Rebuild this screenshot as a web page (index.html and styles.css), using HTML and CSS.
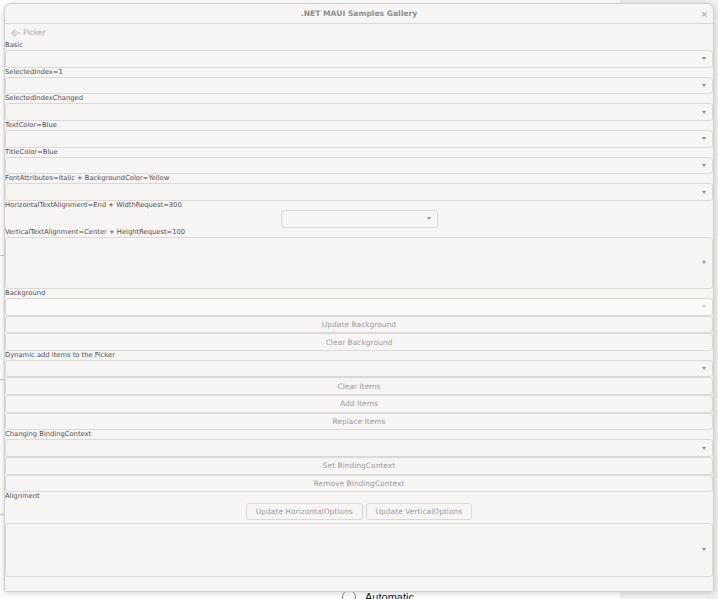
FILE: index.html
```html
<!DOCTYPE html>
<html lang="en">
<head>
  <meta charset="UTF-8" />
  <meta name="viewport" content="width=device-width, initial-scale=1.0" />
  <title>.NET MAUI Samples Gallery</title>
  <link rel="stylesheet" href="styles.css">
</head>
<body>

  <!-- Page behind the dialog window -->
  <div class="page">
    <div class="page-main">
      <div class="page-row row-a"></div>
      <div class="page-row row-b"></div>
      <div class="page-row row-c"></div>
      <div class="radio-row">
        <span class="radio"></span>
        <span class="radio-text">Automatic</span>
      </div>
    </div>
    <div class="page-side"></div>
  </div>

  <!-- Dialog window -->
  <div class="window">
    <header class="titlebar">
      <span></span>
      <span class="title">.NET MAUI Samples Gallery</span>
      <span class="close">&#215;</span>
    </header>

    <div class="content">
      <!-- Back navigation -->
      <div class="nav">
        <svg class="back-icon" width="9" height="8" viewBox="0 0 9 8">
          <path d="M4.6 0.8 L1.2 4 L4.6 7.2" fill="none" stroke="#b3b3b3" stroke-width="1.1" />
          <path d="M6.4 1.8 L4.1 4 L6.4 6.2" fill="none" stroke="#c4c4c4" stroke-width="0.9" />
          <path d="M6.2 4 H9" stroke="#b3b3b3" stroke-width="1" />
        </svg>
        <span class="nav-text">Picker</span>
      </div>

      <div class="label">Basic</div>
      <div class="picker"><span class="arrow"></span></div>

      <div class="label">SelectedIndex=1</div>
      <div class="picker"><span class="arrow"></span></div>

      <div class="label">SelectedIndexChanged</div>
      <div class="picker"><span class="arrow"></span></div>

      <div class="label">TextColor=Blue</div>
      <div class="picker"><span class="arrow"></span></div>

      <div class="label">TitleColor=Blue</div>
      <div class="picker"><span class="arrow"></span></div>

      <div class="label">FontAttributes=Italic + BackgroundColor=Yellow</div>
      <div class="picker"><span class="arrow"></span></div>

      <div class="label">HorizontalTextAlignment=End + WidthRequest=300</div>
      <div class="picker picker-narrow"><span class="arrow"></span></div>

      <div class="label">VerticalTextAlignment=Center + HeightRequest=100</div>
      <div class="picker picker-tall"><span class="arrow"></span></div>

      <div class="label">Background</div>
      <div class="picker picker-light"><span class="arrow"></span></div>
      <button class="btn">Update Background</button>
      <button class="btn">Clear Background</button>

      <div class="label">Dynamic add items to the Picker</div>
      <div class="picker"><span class="arrow"></span></div>
      <button class="btn">Clear Items</button>
      <button class="btn">Add Items</button>
      <button class="btn">Replace Items</button>

      <div class="label">Changing BindingContext</div>
      <div class="picker"><span class="arrow"></span></div>
      <button class="btn">Set BindingContext</button>
      <button class="btn">Remove BindingContext</button>

      <div class="label">Alignment</div>
      <div class="btn-row">
        <button class="btn btn-small">Update HorizontalOptions</button>
        <button class="btn btn-small">Update VerticalOptions</button>
      </div>
      <div class="picker picker-align"><span class="arrow"></span></div>
    </div>
  </div>

</body>
</html>
```

FILE: styles.css
```css
/* Page layout */
body {
  margin: 0;
  width: 718px;
  height: 599px;
  overflow: hidden;
  position: relative;
  font-family: "DejaVu Sans", sans-serif;
  background-color: #ffffff;
}

/* Page behind the window */
.page {
  display: flex;
  height: 599px;
}

.page-main {
  flex: 1;
  display: flex;
  flex-direction: column;
}

.page-side {
  width: 98px;
  background-color: #eff0f2;
}

.page-row {
  flex-shrink: 0;
  border-bottom: 1px solid #c9c9c9;
}

.row-a { height: 255px; }
.row-b { height: 123px; }
.row-c { height: 134px; }

.radio-row {
  flex-shrink: 0;
  display: flex;
  align-items: center;
  gap: 9px;
  margin-top: 75px;
  padding-left: 342px;
}

.radio {
  width: 12px;
  height: 12px;
  border: 1px solid #8a8a8a;
  border-radius: 50%;
}

.radio-text {
  font-family: "Liberation Sans", Arial, sans-serif;
  font-size: 11px;
  color: #222222;
}

/* Dialog window */
.window {
  position: absolute;
  left: 4px;
  top: 3px;
  width: 710px;
  height: 589px;
  box-sizing: border-box;
  background-color: #f6f5f4;
  border: 1px solid #d3d0cc;
  border-radius: 7px 7px 2px 2px;
  box-shadow: 0 1px 6px rgba(0, 0, 0, 0.18);
  overflow: hidden;
}

/* Header bar */
.titlebar {
  height: 19px;
  border-bottom: 1px solid #dcd9d5;
  display: grid;
  grid-template-columns: 1fr auto 1fr;
  align-items: center;
}

.title {
  font-size: 7.6px;
  font-weight: bold;
  color: #8d8f90;
}

.close {
  justify-self: end;
  padding-right: 5px;
  font-size: 9px;
  color: #9a9a9a;
}

/* Content column */
.content {
  display: flex;
  flex-direction: column;
}

.nav {
  height: 17px;
  display: flex;
  align-items: center;
  padding-left: 6px;
  gap: 3px;
}

.nav-text {
  font-size: 7.6px;
  color: #a6a6a6;
}

.label {
  height: 9.07px;
  line-height: 9.07px;
  font-size: 6.75px;
  color: #505050;
  white-space: nowrap;
}

/* Picker boxes */
.picker {
  height: 17.6px;
  box-sizing: border-box;
  border: 1px solid #dcd8d4;
  border-radius: 3px;
  display: flex;
  align-items: center;
  justify-content: flex-end;
  padding-right: 6px;
}

.arrow {
  width: 0;
  height: 0;
  border-left: 2.6px solid transparent;
  border-right: 2.6px solid transparent;
  border-top: 3px solid #8e8e8e;
}

.picker-narrow {
  width: 157px;
  align-self: center;
}

.picker-tall {
  height: 52.33px;
}

.picker-light {
  background-color: #fafaf9;
}

.picker-light .arrow {
  border-top-color: #cccccc;
}

.picker-align {
  height: 54px;
}

/* Buttons */
.btn {
  height: 17.6px;
  box-sizing: border-box;
  margin: 0;
  padding: 0;
  border: 1px solid #dcd8d4;
  border-radius: 3px;
  background-color: #f6f5f4;
  font-family: "DejaVu Sans", sans-serif;
  font-size: 7.5px;
  color: #9c9c9c;
  text-align: center;
}

.btn-row {
  height: 21.73px;
  box-sizing: border-box;
  padding-top: 1.8px;
  display: flex;
  justify-content: center;
  gap: 3px;
}

.btn-small {
  height: 17px;
  padding: 0 9px;
}
```
